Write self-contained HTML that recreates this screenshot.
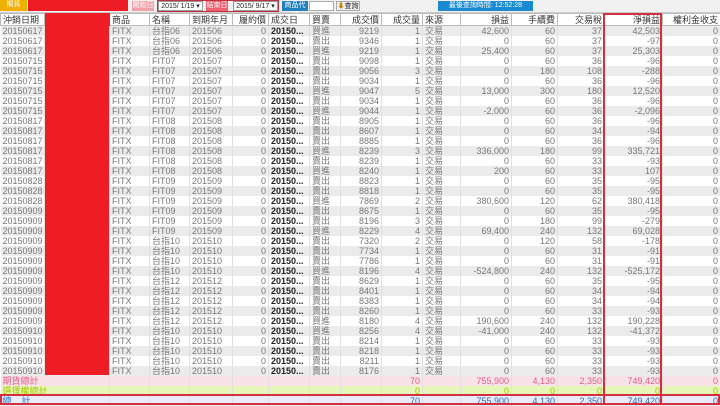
<!DOCTYPE html>
<html><head><meta charset="utf-8"><style>
*{margin:0;padding:0;box-sizing:border-box}
body{width:720px;height:405px;overflow:hidden;background:#fff;font-family:"Liberation Sans","Noto Sans CJK TC",sans-serif;font-size:9px;color:#777;position:relative}
.tb{position:absolute;top:0;left:0;width:720px;height:13px;background:#f0f0f0;border-bottom:1px solid #ccc}
.a{position:absolute;font-size:7px;line-height:10px;text-align:center}
table{position:absolute;top:13px;left:0;border-collapse:collapse;table-layout:fixed;width:720px}
td,th{height:10px;line-height:10px;padding:0 2px;white-space:nowrap;overflow:hidden;border-right:1px solid #e0e0e0}
th{height:12px;font-weight:normal;color:#333;border:1px solid #bbb;background:#fff}
tbody tr:nth-child(odd){background:#ebebeb}
.r{text-align:right}.l{text-align:left}.b{font-weight:bold;color:#222}
tr.p td{background:#f8e2e8;color:#e0608a}
tr.g td{background:#e6f5b8;color:#a8c800}
tr.t td{background:#eaeaf8;color:#2a70c0}
</style></head><body>
<div class="tb">
<div class="a" style="left:0;top:0;width:27px;height:11px;background:#f0b000;color:#fff">期貨</div>
<div class="a" style="left:28px;top:0;width:100px;height:11px;background:#ee1c24"></div>
<div class="a" style="left:132px;top:1px;width:22px;height:10px;background:#f4a0a8;color:#fff">開始日</div>
<div class="a" style="left:157px;top:0;width:122px;height:12px;border:1px solid #c03040"></div>
<div class="a" style="left:158px;top:1px;width:45px;height:10px;background:#fff;color:#222;border:1px solid #999">2015/ 1/19 ▾</div>
<div class="a" style="left:206px;top:1px;width:22px;height:10px;background:#f06070;color:#fff">結束日</div>
<div class="a" style="left:233px;top:1px;width:45px;height:10px;background:#fff;color:#222;border:1px solid #999">2015/ 9/17 ▾</div>
<div class="a" style="left:282px;top:1px;width:26px;height:10px;background:#2080c0;color:#fff">商品代號</div>
<div class="a" style="left:309px;top:1px;width:25px;height:10px;background:#fff;border:1px solid #aaa"></div>
<div class="a" style="left:336px;top:1px;width:24px;height:10px;color:#222;background:#eee;border:1px solid #aaa"><span style="color:#d08000">⬇</span>查詢</div>
<div class="a" style="left:438px;top:1px;width:95px;height:10px;background:#1a8ad0;color:#fff">最後查詢時間: 12:52:28</div>
</div>
<table>
<colgroup><col style="width:44px"><col style="width:65px"><col style="width:40px"><col style="width:40px"><col style="width:43px"><col style="width:36px"><col style="width:41px"><col style="width:31px"><col style="width:41px"><col style="width:41px"><col style="width:38px"><col style="width:51px"><col style="width:46px"><col style="width:47px"><col style="width:58px"><col style="width:58px"></colgroup>
<thead><tr><th class="l">沖銷日期</th><th style="background:#ee1c24;border-color:#ee1c24"></th><th class="l">商品</th><th class="l">名稱</th><th class="l">到期年月</th><th class="r">履約價</th><th class="l">成交日</th><th class="l">買賣</th><th class="r">成交價</th><th class="r">成交量</th><th class="l">來源</th><th class="r">損益</th><th class="r">手續費</th><th class="r">交易稅</th><th class="r">淨損益</th><th class="r">權利金收支</th></tr></thead>
<tbody>
<tr><td>20150617</td><td></td><td>FITX</td><td>台指06</td><td>201506</td><td class="r">0</td><td class="b">20150...</td><td>買進</td><td class="r">9219</td><td class="r">1</td><td>交易</td><td class="r">42,600</td><td class="r">60</td><td class="r">37</td><td class="r">42,503</td><td class="r">0</td></tr>
<tr><td>20150617</td><td></td><td>FITX</td><td>台指06</td><td>201506</td><td class="r">0</td><td class="b">20150...</td><td>賣出</td><td class="r">9346</td><td class="r">1</td><td>交易</td><td class="r">0</td><td class="r">60</td><td class="r">37</td><td class="r">-97</td><td class="r">0</td></tr>
<tr><td>20150617</td><td></td><td>FITX</td><td>台指06</td><td>201506</td><td class="r">0</td><td class="b">20150...</td><td>買進</td><td class="r">9219</td><td class="r">1</td><td>交易</td><td class="r">25,400</td><td class="r">60</td><td class="r">37</td><td class="r">25,303</td><td class="r">0</td></tr>
<tr><td>20150715</td><td></td><td>FITX</td><td>FIT07</td><td>201507</td><td class="r">0</td><td class="b">20150...</td><td>賣出</td><td class="r">9098</td><td class="r">1</td><td>交易</td><td class="r">0</td><td class="r">60</td><td class="r">36</td><td class="r">-96</td><td class="r">0</td></tr>
<tr><td>20150715</td><td></td><td>FITX</td><td>FIT07</td><td>201507</td><td class="r">0</td><td class="b">20150...</td><td>賣出</td><td class="r">9056</td><td class="r">3</td><td>交易</td><td class="r">0</td><td class="r">180</td><td class="r">108</td><td class="r">-288</td><td class="r">0</td></tr>
<tr><td>20150715</td><td></td><td>FITX</td><td>FIT07</td><td>201507</td><td class="r">0</td><td class="b">20150...</td><td>賣出</td><td class="r">9034</td><td class="r">1</td><td>交易</td><td class="r">0</td><td class="r">60</td><td class="r">36</td><td class="r">-96</td><td class="r">0</td></tr>
<tr><td>20150715</td><td></td><td>FITX</td><td>FIT07</td><td>201507</td><td class="r">0</td><td class="b">20150...</td><td>買進</td><td class="r">9047</td><td class="r">5</td><td>交易</td><td class="r">13,000</td><td class="r">300</td><td class="r">180</td><td class="r">12,520</td><td class="r">0</td></tr>
<tr><td>20150715</td><td></td><td>FITX</td><td>FIT07</td><td>201507</td><td class="r">0</td><td class="b">20150...</td><td>賣出</td><td class="r">9034</td><td class="r">1</td><td>交易</td><td class="r">0</td><td class="r">60</td><td class="r">36</td><td class="r">-96</td><td class="r">0</td></tr>
<tr><td>20150715</td><td></td><td>FITX</td><td>FIT07</td><td>201507</td><td class="r">0</td><td class="b">20150...</td><td>買進</td><td class="r">9044</td><td class="r">1</td><td>交易</td><td class="r">-2,000</td><td class="r">60</td><td class="r">36</td><td class="r">-2,096</td><td class="r">0</td></tr>
<tr><td>20150817</td><td></td><td>FITX</td><td>FIT08</td><td>201508</td><td class="r">0</td><td class="b">20150...</td><td>賣出</td><td class="r">8905</td><td class="r">1</td><td>交易</td><td class="r">0</td><td class="r">60</td><td class="r">36</td><td class="r">-96</td><td class="r">0</td></tr>
<tr><td>20150817</td><td></td><td>FITX</td><td>FIT08</td><td>201508</td><td class="r">0</td><td class="b">20150...</td><td>賣出</td><td class="r">8607</td><td class="r">1</td><td>交易</td><td class="r">0</td><td class="r">60</td><td class="r">34</td><td class="r">-94</td><td class="r">0</td></tr>
<tr><td>20150817</td><td></td><td>FITX</td><td>FIT08</td><td>201508</td><td class="r">0</td><td class="b">20150...</td><td>賣出</td><td class="r">8885</td><td class="r">1</td><td>交易</td><td class="r">0</td><td class="r">60</td><td class="r">36</td><td class="r">-96</td><td class="r">0</td></tr>
<tr><td>20150817</td><td></td><td>FITX</td><td>FIT08</td><td>201508</td><td class="r">0</td><td class="b">20150...</td><td>買進</td><td class="r">8239</td><td class="r">3</td><td>交易</td><td class="r">336,000</td><td class="r">180</td><td class="r">99</td><td class="r">335,721</td><td class="r">0</td></tr>
<tr><td>20150817</td><td></td><td>FITX</td><td>FIT08</td><td>201508</td><td class="r">0</td><td class="b">20150...</td><td>賣出</td><td class="r">8239</td><td class="r">1</td><td>交易</td><td class="r">0</td><td class="r">60</td><td class="r">33</td><td class="r">-93</td><td class="r">0</td></tr>
<tr><td>20150817</td><td></td><td>FITX</td><td>FIT08</td><td>201508</td><td class="r">0</td><td class="b">20150...</td><td>買進</td><td class="r">8240</td><td class="r">1</td><td>交易</td><td class="r">200</td><td class="r">60</td><td class="r">33</td><td class="r">107</td><td class="r">0</td></tr>
<tr><td>20150828</td><td></td><td>FITX</td><td>FIT09</td><td>201509</td><td class="r">0</td><td class="b">20150...</td><td>賣出</td><td class="r">8823</td><td class="r">1</td><td>交易</td><td class="r">0</td><td class="r">60</td><td class="r">35</td><td class="r">-95</td><td class="r">0</td></tr>
<tr><td>20150828</td><td></td><td>FITX</td><td>FIT09</td><td>201509</td><td class="r">0</td><td class="b">20150...</td><td>賣出</td><td class="r">8818</td><td class="r">1</td><td>交易</td><td class="r">0</td><td class="r">60</td><td class="r">35</td><td class="r">-95</td><td class="r">0</td></tr>
<tr><td>20150828</td><td></td><td>FITX</td><td>FIT09</td><td>201509</td><td class="r">0</td><td class="b">20150...</td><td>買進</td><td class="r">7869</td><td class="r">2</td><td>交易</td><td class="r">380,600</td><td class="r">120</td><td class="r">62</td><td class="r">380,418</td><td class="r">0</td></tr>
<tr><td>20150909</td><td></td><td>FITX</td><td>FIT09</td><td>201509</td><td class="r">0</td><td class="b">20150...</td><td>賣出</td><td class="r">8675</td><td class="r">1</td><td>交易</td><td class="r">0</td><td class="r">60</td><td class="r">35</td><td class="r">-95</td><td class="r">0</td></tr>
<tr><td>20150909</td><td></td><td>FITX</td><td>FIT09</td><td>201509</td><td class="r">0</td><td class="b">20150...</td><td>賣出</td><td class="r">8196</td><td class="r">3</td><td>交易</td><td class="r">0</td><td class="r">180</td><td class="r">99</td><td class="r">-279</td><td class="r">0</td></tr>
<tr><td>20150909</td><td></td><td>FITX</td><td>FIT09</td><td>201509</td><td class="r">0</td><td class="b">20150...</td><td>買進</td><td class="r">8229</td><td class="r">4</td><td>交易</td><td class="r">69,400</td><td class="r">240</td><td class="r">132</td><td class="r">69,028</td><td class="r">0</td></tr>
<tr><td>20150909</td><td></td><td>FITX</td><td>台指10</td><td>201510</td><td class="r">0</td><td class="b">20150...</td><td>賣出</td><td class="r">7320</td><td class="r">2</td><td>交易</td><td class="r">0</td><td class="r">120</td><td class="r">58</td><td class="r">-178</td><td class="r">0</td></tr>
<tr><td>20150909</td><td></td><td>FITX</td><td>台指10</td><td>201510</td><td class="r">0</td><td class="b">20150...</td><td>賣出</td><td class="r">7734</td><td class="r">1</td><td>交易</td><td class="r">0</td><td class="r">60</td><td class="r">31</td><td class="r">-91</td><td class="r">0</td></tr>
<tr><td>20150909</td><td></td><td>FITX</td><td>台指10</td><td>201510</td><td class="r">0</td><td class="b">20150...</td><td>賣出</td><td class="r">7786</td><td class="r">1</td><td>交易</td><td class="r">0</td><td class="r">60</td><td class="r">31</td><td class="r">-91</td><td class="r">0</td></tr>
<tr><td>20150909</td><td></td><td>FITX</td><td>台指10</td><td>201510</td><td class="r">0</td><td class="b">20150...</td><td>買進</td><td class="r">8196</td><td class="r">4</td><td>交易</td><td class="r">-524,800</td><td class="r">240</td><td class="r">132</td><td class="r">-525,172</td><td class="r">0</td></tr>
<tr><td>20150909</td><td></td><td>FITX</td><td>台指12</td><td>201512</td><td class="r">0</td><td class="b">20150...</td><td>賣出</td><td class="r">8629</td><td class="r">1</td><td>交易</td><td class="r">0</td><td class="r">60</td><td class="r">35</td><td class="r">-95</td><td class="r">0</td></tr>
<tr><td>20150909</td><td></td><td>FITX</td><td>台指12</td><td>201512</td><td class="r">0</td><td class="b">20150...</td><td>賣出</td><td class="r">8401</td><td class="r">1</td><td>交易</td><td class="r">0</td><td class="r">60</td><td class="r">34</td><td class="r">-94</td><td class="r">0</td></tr>
<tr><td>20150909</td><td></td><td>FITX</td><td>台指12</td><td>201512</td><td class="r">0</td><td class="b">20150...</td><td>賣出</td><td class="r">8383</td><td class="r">1</td><td>交易</td><td class="r">0</td><td class="r">60</td><td class="r">34</td><td class="r">-94</td><td class="r">0</td></tr>
<tr><td>20150909</td><td></td><td>FITX</td><td>台指12</td><td>201512</td><td class="r">0</td><td class="b">20150...</td><td>賣出</td><td class="r">8260</td><td class="r">1</td><td>交易</td><td class="r">0</td><td class="r">60</td><td class="r">33</td><td class="r">-93</td><td class="r">0</td></tr>
<tr><td>20150909</td><td></td><td>FITX</td><td>台指12</td><td>201512</td><td class="r">0</td><td class="b">20150...</td><td>買進</td><td class="r">8180</td><td class="r">4</td><td>交易</td><td class="r">190,600</td><td class="r">240</td><td class="r">132</td><td class="r">190,228</td><td class="r">0</td></tr>
<tr><td>20150910</td><td></td><td>FITX</td><td>台指10</td><td>201510</td><td class="r">0</td><td class="b">20150...</td><td>買進</td><td class="r">8256</td><td class="r">4</td><td>交易</td><td class="r">-41,000</td><td class="r">240</td><td class="r">132</td><td class="r">-41,372</td><td class="r">0</td></tr>
<tr><td>20150910</td><td></td><td>FITX</td><td>台指10</td><td>201510</td><td class="r">0</td><td class="b">20150...</td><td>賣出</td><td class="r">8214</td><td class="r">1</td><td>交易</td><td class="r">0</td><td class="r">60</td><td class="r">33</td><td class="r">-93</td><td class="r">0</td></tr>
<tr><td>20150910</td><td></td><td>FITX</td><td>台指10</td><td>201510</td><td class="r">0</td><td class="b">20150...</td><td>賣出</td><td class="r">8218</td><td class="r">1</td><td>交易</td><td class="r">0</td><td class="r">60</td><td class="r">33</td><td class="r">-93</td><td class="r">0</td></tr>
<tr><td>20150910</td><td></td><td>FITX</td><td>台指10</td><td>201510</td><td class="r">0</td><td class="b">20150...</td><td>賣出</td><td class="r">8211</td><td class="r">1</td><td>交易</td><td class="r">0</td><td class="r">60</td><td class="r">33</td><td class="r">-93</td><td class="r">0</td></tr>
<tr><td>20150910</td><td></td><td>FITX</td><td>台指10</td><td>201510</td><td class="r">0</td><td class="b">20150...</td><td>賣出</td><td class="r">8176</td><td class="r">1</td><td>交易</td><td class="r">0</td><td class="r">60</td><td class="r">33</td><td class="r">-93</td><td class="r">0</td></tr>
<tr class="p"><td colspan="2">期貨總計</td><td></td><td></td><td></td><td></td><td></td><td></td><td></td><td class="r">70</td><td></td><td class="r">755,900</td><td class="r">4,130</td><td class="r">2,350</td><td class="r">749,420</td><td class="r">0</td></tr>
<tr class="g"><td colspan="2">選擇權總計</td><td></td><td></td><td></td><td></td><td></td><td></td><td></td><td class="r">0</td><td></td><td class="r">0</td><td class="r">0</td><td class="r">0</td><td class="r">0</td><td class="r">0</td></tr>
<tr class="t"><td colspan="2">總&nbsp;&nbsp;&nbsp;&nbsp;計</td><td></td><td></td><td></td><td></td><td></td><td></td><td></td><td class="r">70</td><td></td><td class="r">755,900</td><td class="r">4,130</td><td class="r">2,350</td><td class="r">749,420</td><td class="r">0</td></tr>
</tbody></table>
<div style="position:absolute;left:45px;top:26px;width:64px;height:349px;background:#ee1c24"></div>
<div style="position:absolute;left:603px;top:13px;width:59px;height:392px;border:2px solid #d03040"></div>
<div style="position:absolute;left:0;top:394px;width:720px;height:11px;border:2px solid #d03040"></div>
</body></html>
